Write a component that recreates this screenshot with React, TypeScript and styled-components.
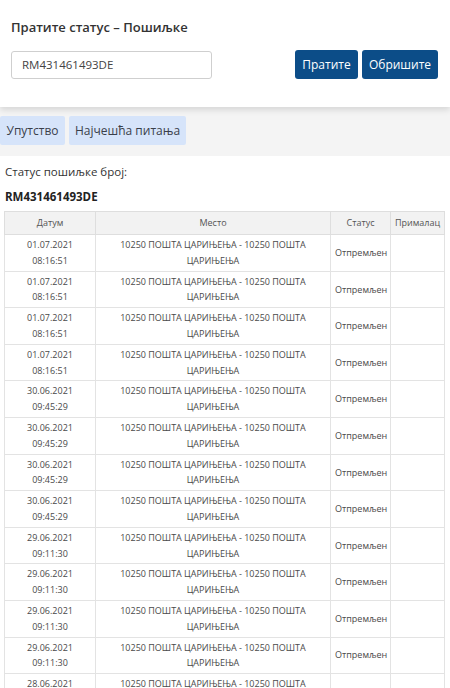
import React from "react"
import styled, { createGlobalStyle } from "styled-components"

const GlobalStyle = createGlobalStyle`
  html, body {
    margin: 0;
    padding: 0;
    background: #fff;
    font-family: "Open Sans", "Noto Sans", sans-serif;
    color: #333;
  }
  * { box-sizing: border-box; }
`

const Page = styled.div`
  width: 450px;
  display: flex;
  flex-direction: column;
`

const TrackCard = styled.div`
  background: #fff;
  padding: 17px 12px 28px 11px;
  box-shadow: 0 3px 6px rgba(0, 0, 0, 0.12);
  position: relative;
  z-index: 1;
`

const Title = styled.h1`
  margin: 0 0 13px;
  font-size: 13px;
  font-weight: 600;
  line-height: 20px;
  color: #333;
`

const SearchRow = styled.div`
  display: flex;
  align-items: center;
  justify-content: space-between;
`

const Input = styled.input`
  width: 201px;
  height: 28px;
  border: 1px solid #cfcfcf;
  border-radius: 3px;
  padding: 0 10px;
  font-family: inherit;
  font-size: 11.5px;
  color: #444;
  outline: none;
`

const Buttons = styled.div`
  display: flex;
  gap: 4px;
`

const Button = styled.button<{ $w: number }>`
  width: ${(p) => p.$w}px;
  height: 29px;
  border: none;
  border-radius: 3px;
  background: #0c4d88;
  color: #fff;
  font-family: inherit;
  font-size: 12px;
  font-weight: 500;
  padding: 0;
  cursor: pointer;
`

const TabBand = styled.div`
  background: #f4f4f4;
  padding: 9px 0 11px;
  display: flex;
  gap: 4px;
`

const Tab = styled.div<{ $w: number }>`
  width: ${(p) => p.$w}px;
  height: 29px;
  display: flex;
  align-items: center;
  justify-content: center;
  background: #d6e4fa;
  border-radius: 2px;
  font-size: 12px;
  color: #3a3f4a;
`

const Content = styled.div`
  padding: 7px 0 0 4px;
`

const Label = styled.div`
  font-size: 11.5px;
  line-height: 18px;
  padding-left: 1px;
  color: #333;
`

const Code = styled.div`
  font-size: 11.5px;
  font-weight: 700;
  line-height: 18px;
  margin: 7px 0 5px 1px;
  color: #222;
`

const Table = styled.table`
  width: 440px;
  border-collapse: collapse;
  table-layout: fixed;
  font-size: 9px;
  color: #4a4a4a;
`

const Th = styled.th<{ $w: number }>`
  width: ${(p) => p.$w}px;
  background: #f2f2f2;
  border: 1px solid #dedede;
  font-weight: 400;
  line-height: 16px;
  padding: 3px 2px;
  text-align: center;
  color: #555;
`

const Td = styled.td`
  border: 1px solid #e3e3e3;
  line-height: 15.7px;
  padding: 2px 4px;
  text-align: center;
  vertical-align: middle;
  height: 36.6px;
`

const rows = [
  ["01.07.2021", "08:16:51"],
  ["01.07.2021", "08:16:51"],
  ["01.07.2021", "08:16:51"],
  ["01.07.2021", "08:16:51"],
  ["30.06.2021", "09:45:29"],
  ["30.06.2021", "09:45:29"],
  ["30.06.2021", "09:45:29"],
  ["30.06.2021", "09:45:29"],
  ["29.06.2021", "09:11:30"],
  ["29.06.2021", "09:11:30"],
  ["29.06.2021", "09:11:30"],
  ["29.06.2021", "09:11:30"],
  ["28.06.2021", "10:02:14"],
  ["28.06.2021", "10:02:14"],
]

const App: React.FC = () => {
  return (
    <Page>
      <GlobalStyle />
      <TrackCard>
        <Title>Пратите статус – Пошиљке</Title>
        <SearchRow>
          <Input defaultValue="RM431461493DE" />
          <Buttons>
            <Button $w={63}>Пратите</Button>
            <Button $w={76}>Обришите</Button>
          </Buttons>
        </SearchRow>
      </TrackCard>
      <TabBand>
        <Tab $w={65}>Упутство</Tab>
        <Tab $w={117}>Најчешћа питања</Tab>
      </TabBand>
      <Content>
        <Label>Статус пошиљке број:</Label>
        <Code>RM431461493DE</Code>
        <Table>
          <thead>
            <tr>
              <Th $w={91}>Датум</Th>
              <Th $w={235}>Место</Th>
              <Th $w={60}>Статус</Th>
              <Th $w={54}>Прималац</Th>
            </tr>
          </thead>
          <tbody>
            {rows.map(([date, time], i) => (
              <tr key={i}>
                <Td>
                  {date}
                  <br />
                  {time}
                </Td>
                <Td>10250 ПОШТА ЦАРИЊЕЊА - 10250 ПОШТА ЦАРИЊЕЊА</Td>
                <Td>Отпремљен</Td>
                <Td />
              </tr>
            ))}
          </tbody>
        </Table>
      </Content>
    </Page>
  )
}

export default App
